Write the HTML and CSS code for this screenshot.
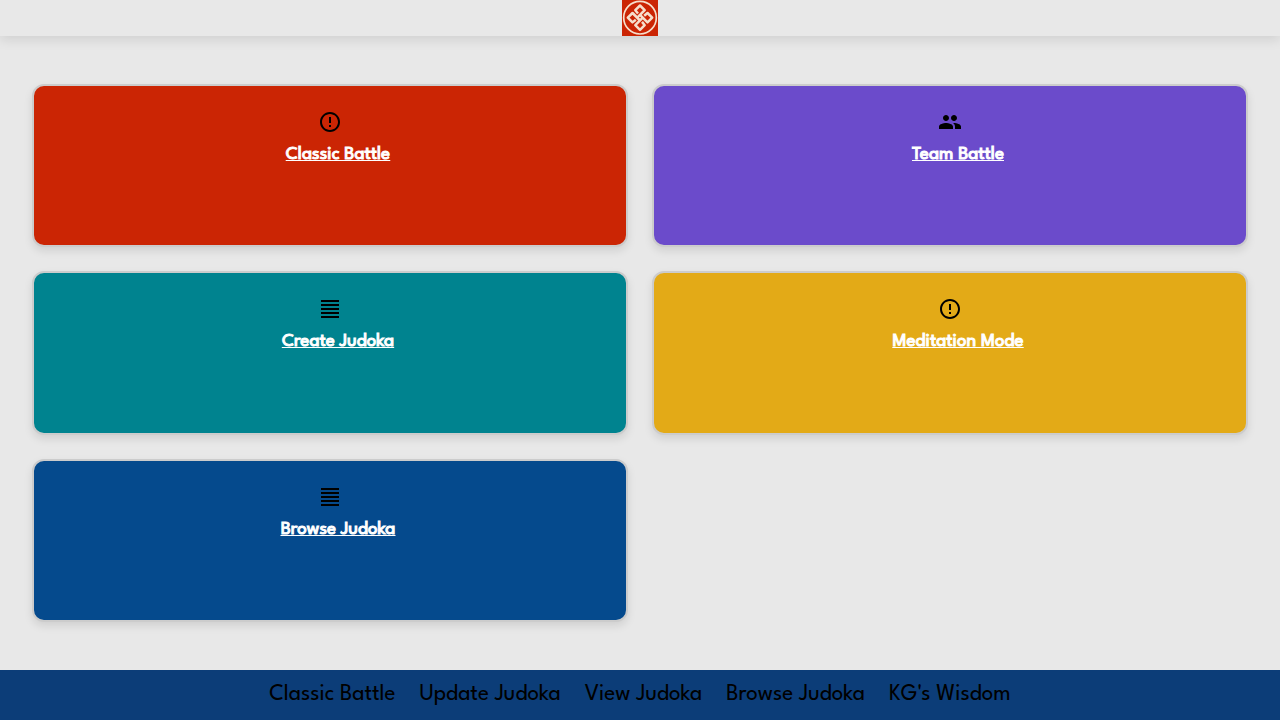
FILE: index.html
```html
<!DOCTYPE html>
<html lang="en">
<head>
<meta charset="utf-8">
<meta name="viewport" content="width=device-width, initial-scale=1">
<title>Judoka</title>
<link rel="stylesheet" href="styles.css">
</head>
<body>
<header class="header">
  <a class="logo" href="#" aria-label="Home">
    <svg viewBox="0 0 36 36" width="36" height="36" aria-hidden="true">
      <rect width="36" height="36" fill="#cb2504"/>
      <g fill="none" stroke="#f6dfcc">
        <circle cx="18" cy="17.700" r="16.300" stroke-width="1.700"/>
        <g stroke-width="2.500" stroke-linejoin="round">
          <path d="M16 13.500L13.300 10.200 18 5.500l4.700 4.700-7.500 7.500"/>
          <path d="M20 21.900l2.700 3.300L18 29.900l-4.700-4.700 7.500-7.500"/>
          <path d="M13.800 19.700l-3.300 2.700-4.700-4.700 4.700-4.700 7.500 7.500"/>
          <path d="M22.200 15.700l3.300-2.700 4.700 4.700-4.700 4.700-7.500-7.500"/>
        </g>
      </g>
    </svg>
  </a>
</header>
<main class="grid">
  <a class="card battle" href="#">
    <svg class="icon" viewBox="0 0 24 24" aria-hidden="true"><path d="M11 15h2v2h-2zm0-8h2v6h-2zm.99-5C6.470 2 2 6.480 2 12s4.470 10 9.990 10C17.520 22 22 17.520 22 12S17.520 2 11.990 2zM12 20c-4.420 0-8-3.580-8-8s3.580-8 8-8 8 3.580 8 8-3.580 8-8 8z"/></svg>
    <span class="title">Classic Battle</span>
  </a>
  <a class="card team" href="#">
    <svg class="icon" viewBox="0 0 24 24" aria-hidden="true"><path d="M16 11c1.660 0 2.990-1.340 2.990-3S17.660 5 16 5s-3 1.340-3 3 1.340 3 3 3zm-8 0c1.660 0 2.990-1.340 2.990-3S9.660 5 8 5 5 6.340 5 8s1.340 3 3 3zm0 2c-2.330 0-7 1.170-7 3.500V19h14v-2.500C15 14.170 10.330 13 8 13zm8 0c-.29 0-.62.020-.97.050C16.190 13.890 17 15.020 17 16.500V19h6v-2.500c0-2.330-4.670-3.500-7-3.500z"/></svg>
    <span class="title">Team Battle</span>
  </a>
  <a class="card create" href="#">
    <svg class="icon" viewBox="0 0 24 24" aria-hidden="true"><path d="M3 3h18v2H3zm0 4h18v2H3zm0 4h18v2H3zm0 4h18v2H3zm0 4h18v2H3z"/></svg>
    <span class="title">Create Judoka</span>
  </a>
  <a class="card meditation" href="#">
    <svg class="icon" viewBox="0 0 24 24" aria-hidden="true"><path d="M11 15h2v2h-2zm0-8h2v6h-2zm.99-5C6.470 2 2 6.480 2 12s4.470 10 9.990 10C17.520 22 22 17.520 22 12S17.520 2 11.990 2zM12 20c-4.420 0-8-3.580-8-8s3.580-8 8-8 8 3.580 8 8-3.580 8-8 8z"/></svg>
    <span class="title">Meditation Mode</span>
  </a>
  <a class="card browse" href="#">
    <svg class="icon" viewBox="0 0 24 24" aria-hidden="true"><path d="M3 3h18v2H3zm0 4h18v2H3zm0 4h18v2H3zm0 4h18v2H3zm0 4h18v2H3z"/></svg>
    <span class="title">Browse Judoka</span>
  </a>
</main>
<footer class="footer">
  <nav class="links" aria-label="Game">
    <a href="#">Classic Battle</a>
    <a href="#">Update Judoka</a>
    <a href="#">View Judoka</a>
    <a href="#">Browse Judoka</a>
    <a href="#">KG's Wisdom</a>
  </nav>
</footer>
</body>
</html>
```
FILE: styles.css
```css
* { box-sizing: border-box; }

body {
  display: flex;
  flex-direction: column;
  min-height: 100vh;
  margin: 0;
  background: #e8e8e8;
  color: #000;
  font-family: "League Spartan", Lato, sans-serif;
}

.header {
  display: flex;
  justify-content: center;
  box-shadow: 0 4px 12px rgba(0, 0, 0, 0.1);
}

.logo, .logo svg { display: block; }

.grid {
  flex: 1;
  display: grid;
  grid-template-columns: 1fr 1fr;
  grid-auto-rows: 1fr;
  gap: 24px;
  padding: 48px 32px;
}

.card {
  display: flex;
  flex-direction: column;
  align-items: center;
  padding: 24px 16px;
  border: 2px solid #ccc;
  border-radius: 12px;
  box-shadow: 0 4px 8px rgba(0, 0, 0, 0.1);
  color: #fff;
}

.battle { background: #cb2504; }
.team { background: #6b4bcb; }
.create { background: #00838f; }
.meditation { background: #e3aa17; }
.browse { background: #054a8d; }

.icon {
  width: 24px;
  height: 24px;
  fill: #000;
}

.title {
  margin-top: 8px;
  padding-left: 16px;
  font-size: 19px;
  font-weight: 400;
  line-height: 26px;
  text-decoration: underline;
  -webkit-text-stroke: 1px #fff;
}

.footer {
  padding: 8px 16px;
  background: #0c3d78;
}

.links {
  display: flex;
  flex-wrap: wrap;
  justify-content: center;
  gap: 24px;
}

.links a {
  color: #000;
  font-size: 23px;
  line-height: 34px;
  text-decoration: none;
}
```
